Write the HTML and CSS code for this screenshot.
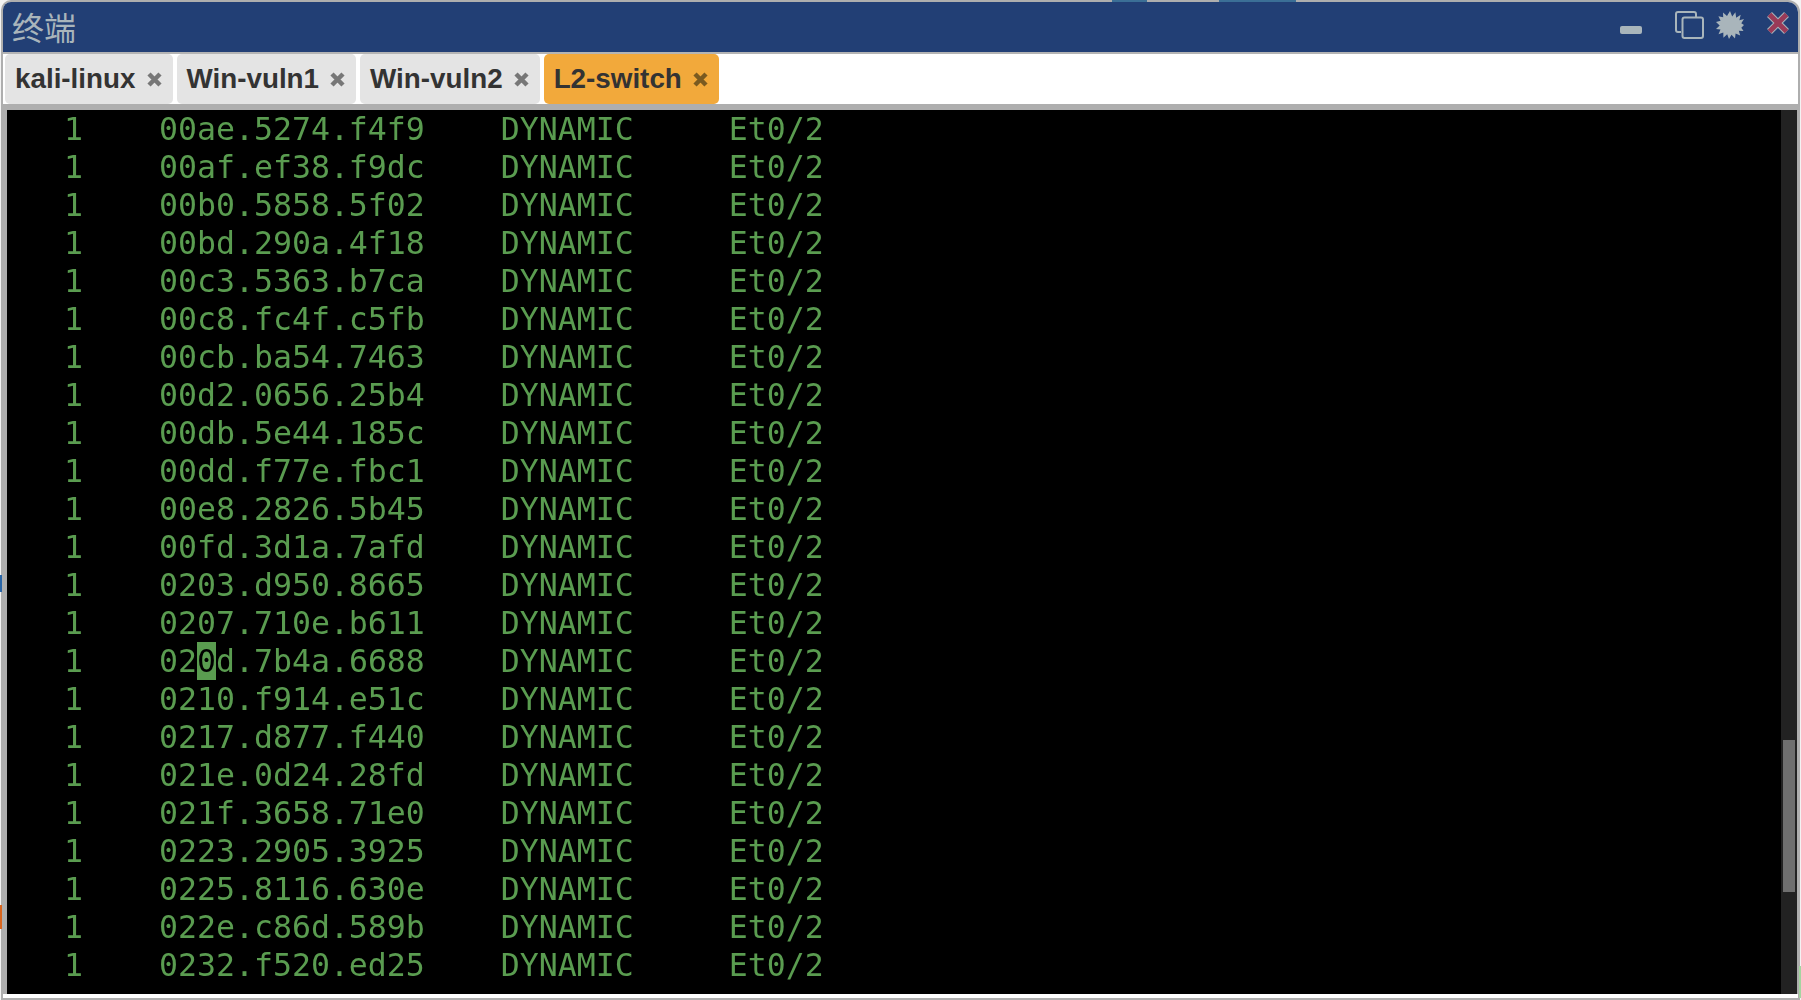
FILE: index.html
```html
<!DOCTYPE html>
<html lang="zh">
<head>
<meta charset="utf-8">
<title>终端</title>
<link rel="stylesheet" href="styles.css">
</head>
<body>
<div class="window">
  <header class="titlebar">
    <span class="title">终端</span>
    <div class="controls">
      <svg class="ic-min" width="22" height="8" viewBox="0 0 22 8"><rect width="22" height="8" rx="2" fill="#a9b5bb"/></svg>
      <svg class="ic-restore" width="29" height="28" viewBox="0 0 29 28" fill="none" stroke="#a9b5bb" stroke-width="2"><path d="M6 21H3a2 2 0 0 1-2-2V3a2 2 0 0 1 2-2h16a2 2 0 0 1 2 2v3"/><rect x="7.5" y="6.500" width="20.500" height="20.500" rx="2"/></svg>
      <svg class="ic-gear" width="28" height="28" viewBox="0 0 28 28"><polygon fill="#a9b5bb" points="14,0 16.200,5.600 19.400,1.200 20.200,6.700 24.700,3.800 23.400,9.200 28,8 25.300,12.300 28,14 25.300,16.700 27.500,20 22.800,19.800 24.200,24.500 19.600,22.600 19,27.500 15.500,23.700 13,28 11.200,23.200 7.400,26.700 7.300,21.600 2.500,23.300 4.500,18.600 0,18 3.700,14.500 0,11 4.600,9.700 2.400,5.300 7.200,6.300 7,1.500 11,5"/></svg>
      <svg class="ic-close" width="24" height="24" viewBox="0 0 24 24"><path d="M3.500 3.500L20.500 20.500M20.500 3.500L3.500 20.500" stroke="#a9b5bb" stroke-width="7"/><path d="M3.500 3.500L20.500 20.500M20.500 3.500L3.500 20.500" stroke="#9a3a58" stroke-width="5"/></svg>
    </div>
  </header>
  <nav class="tabbar">
    <div class="tab"><span>kali-linux</span><svg class="x" width="15" height="15" viewBox="0 0 15 15"><path d="M2 2L13 13M13 2L2 13"/></svg></div>
    <div class="tab"><span>Win-vuln1</span><svg class="x" width="15" height="15" viewBox="0 0 15 15"><path d="M2 2L13 13M13 2L2 13"/></svg></div>
    <div class="tab"><span>Win-vuln2</span><svg class="x" width="15" height="15" viewBox="0 0 15 15"><path d="M2 2L13 13M13 2L2 13"/></svg></div>
    <div class="tab active"><span>L2-switch</span><svg class="x" width="15" height="15" viewBox="0 0 15 15"><path d="M2 2L13 13M13 2L2 13"/></svg></div>
  </nav>
  <main class="termwrap">
    <div class="screen">
      <div class="row">   1    00ae.5274.f4f9    DYNAMIC     Et0/2</div>
      <div class="row">   1    00af.ef38.f9dc    DYNAMIC     Et0/2</div>
      <div class="row">   1    00b0.5858.5f02    DYNAMIC     Et0/2</div>
      <div class="row">   1    00bd.290a.4f18    DYNAMIC     Et0/2</div>
      <div class="row">   1    00c3.5363.b7ca    DYNAMIC     Et0/2</div>
      <div class="row">   1    00c8.fc4f.c5fb    DYNAMIC     Et0/2</div>
      <div class="row">   1    00cb.ba54.7463    DYNAMIC     Et0/2</div>
      <div class="row">   1    00d2.0656.25b4    DYNAMIC     Et0/2</div>
      <div class="row">   1    00db.5e44.185c    DYNAMIC     Et0/2</div>
      <div class="row">   1    00dd.f77e.fbc1    DYNAMIC     Et0/2</div>
      <div class="row">   1    00e8.2826.5b45    DYNAMIC     Et0/2</div>
      <div class="row">   1    00fd.3d1a.7afd    DYNAMIC     Et0/2</div>
      <div class="row">   1    0203.d950.8665    DYNAMIC     Et0/2</div>
      <div class="row">   1    0207.710e.b611    DYNAMIC     Et0/2</div>
      <div class="row">   1    02<span class="cursor">0</span>d.7b4a.6688    DYNAMIC     Et0/2</div>
      <div class="row">   1    0210.f914.e51c    DYNAMIC     Et0/2</div>
      <div class="row">   1    0217.d877.f440    DYNAMIC     Et0/2</div>
      <div class="row">   1    021e.0d24.28fd    DYNAMIC     Et0/2</div>
      <div class="row">   1    021f.3658.71e0    DYNAMIC     Et0/2</div>
      <div class="row">   1    0223.2905.3925    DYNAMIC     Et0/2</div>
      <div class="row">   1    0225.8116.630e    DYNAMIC     Et0/2</div>
      <div class="row">   1    022e.c86d.589b    DYNAMIC     Et0/2</div>
      <div class="row">   1    0232.f520.ed25    DYNAMIC     Et0/2</div>
    </div>
    <div class="scrollbar"><div class="thumb"></div></div>
  </main>
</div>
<div class="peek peek-top-a"></div>
<div class="peek peek-top-b"></div>
<div class="peek peek-left-a"></div>
<div class="peek peek-left-b"></div>
<div class="peek peek-right"></div>
</body>
</html>
```
FILE: styles.css
```css
* { box-sizing: border-box; }
html, body { margin: 0; height: 1000px; overflow: hidden; background: #f3f3f3; }
body { padding: 0 1px 0 1px; position: relative; }

.window {
  height: 1000px;
  display: flex;
  flex-direction: column;
  background: #fff;
  border: 2px solid #aeaeae;
  border-radius: 10px 12px 0 0;
  overflow: hidden;
}

.titlebar {
  flex: none;
  height: 52px;
  display: flex;
  align-items: center;
  justify-content: space-between;
  background: #223f75;
  border-bottom: 2px solid #b4b4b4;
  padding: 0 8px 0 9px;
}
.title {
  font-family: "Noto Sans CJK SC", "Liberation Sans", sans-serif;
  font-size: 32px;
  line-height: 44px;
  margin-top: -3px;
  color: #a9b5bb;
}
.controls { display: flex; align-items: flex-start; height: 50px; }
.ic-min { margin-top: 24px; }
.ic-restore { margin: 9px 0 0 33px; }
.ic-gear { margin: 9px 0 0 12px; }
.ic-close { margin: 9px 0 0 22px; }

.tabbar {
  flex: none;
  height: 50px;
  display: flex;
  gap: 4px;
  padding-left: 2px;
  background: #fff;
}
.tab {
  display: flex;
  align-items: center;
  gap: 11px;
  padding: 0 11px 0 10px;
  border-radius: 5px;
  background: #e4e4e4;
  color: #333;
  font-family: "Liberation Sans", Arial, sans-serif;
  font-weight: 700;
  font-size: 27.800px;
}
.tab.active { background: #f2a93b; }
.x path { stroke: #777; stroke-width: 4.500; fill: none; }
.active .x path { stroke: #7a5a20; }

.termwrap {
  flex: none;
  height: 890px;
  display: flex;
  background: #aeaeae;
  padding: 6px 1px 0 4px;
}
.screen {
  flex: 1;
  height: 884px;
  background: #000;
  color: #5a9c50;
  font-family: "DejaVu Sans Mono", monospace;
  font-size: 31.560px;
  filter: blur(0.4px);
}
.row { height: 38px; line-height: 38px; white-space: pre; }
.cursor { background: #5a9c50; color: #000; display: inline-block; height: 38px; }
.scrollbar {
  flex: none;
  width: 16px;
  height: 884px;
  background: #222;
  padding: 630px 2px 0;
}
.thumb { height: 152px; background: #6f6f6f; }

.peek { position: absolute; }
.peek-top-a { left: 1112px; top: 0; width: 35px; height: 2px; background: #3b6f96; }
.peek-top-b { left: 1219px; top: 0; width: 77px; height: 2px; background: #3b6f96; }
.peek-left-a { left: 0; top: 575px; width: 2px; height: 17px; background: #2a66a8; }
.peek-left-b { left: 0; top: 905px; width: 2px; height: 24px; background: #d9661f; }
.peek-right { right: 0; top: 966px; width: 2px; height: 32px; background: #a4d4a0; }
```
